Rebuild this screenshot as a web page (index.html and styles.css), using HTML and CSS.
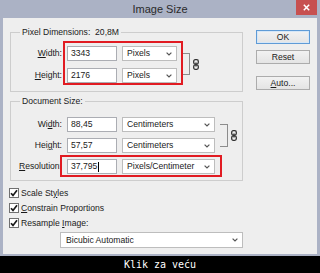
FILE: index.html
```html
<!DOCTYPE html>
<html>
<head>
<meta charset="utf-8">
<link rel="stylesheet" href="styles.css">
</head>
<body>
<div class="window">
  <div class="titlebar">
    <span class="title">Image Size</span>
    <span class="close"><svg width="7" height="7" viewBox="0 0 7 7"><path d="M0.8 0.8L6.2 6.2M6.2 0.8L0.8 6.2" stroke="#fff" stroke-width="1.5"/></svg></span>
  </div>
  <div class="client">
    <div class="left">
      <fieldset class="group group-pixel">
        <legend>Pixel Dimensions:&nbsp; 20,8M</legend>
        <div class="grid grid-pixel">
          <span class="lbl"><u>W</u>idth:</span>
          <div class="field">3343</div>
          <div class="combo"><span>Pixels</span><svg class="chev" width="6" height="4" viewBox="0 0 6 4"><path d="M0.6 0.6L3 3L5.4 0.6" fill="none" stroke="#555" stroke-width="1.2"/></svg></div>
          <div class="link link-pixel">
            <span class="bracket bracket-pixel"></span>
            <svg width="6" height="11" viewBox="0 0 6 11"><rect x="0.7" y="0.7" width="4.6" height="4.4" rx="1.5" fill="none" stroke="#333" stroke-width="1.3"/><rect x="0.7" y="5.9" width="4.6" height="4.4" rx="1.5" fill="none" stroke="#333" stroke-width="1.3"/><path d="M3 3.4V7.6" stroke="#333" stroke-width="1.3"/></svg>
          </div>
          <span class="lbl"><u>H</u>eight:</span>
          <div class="field">2176</div>
          <div class="combo"><span>Pixels</span><svg class="chev" width="6" height="4" viewBox="0 0 6 4"><path d="M0.6 0.6L3 3L5.4 0.6" fill="none" stroke="#555" stroke-width="1.2"/></svg></div>
        </div>
      </fieldset>
      <fieldset class="group group-doc">
        <legend>Document Size:</legend>
        <div class="grid grid-doc">
          <span class="lbl">Wi<u>d</u>th:</span>
          <div class="field">88,45</div>
          <div class="combo"><span>Centimeters</span><svg class="chev" width="6" height="4" viewBox="0 0 6 4"><path d="M0.6 0.6L3 3L5.4 0.6" fill="none" stroke="#555" stroke-width="1.2"/></svg></div>
          <div class="link link-doc">
            <span class="bracket bracket-doc"></span>
            <svg width="6" height="11" viewBox="0 0 6 11"><rect x="0.7" y="0.7" width="4.6" height="4.4" rx="1.5" fill="none" stroke="#333" stroke-width="1.3"/><rect x="0.7" y="5.9" width="4.6" height="4.4" rx="1.5" fill="none" stroke="#333" stroke-width="1.3"/><path d="M3 3.4V7.6" stroke="#333" stroke-width="1.3"/></svg>
          </div>
          <span class="lbl">Hei<u>g</u>ht:</span>
          <div class="field">57,57</div>
          <div class="combo"><span>Centimeters</span><svg class="chev" width="6" height="4" viewBox="0 0 6 4"><path d="M0.6 0.6L3 3L5.4 0.6" fill="none" stroke="#555" stroke-width="1.2"/></svg></div>
          <span class="lbl"><u>R</u>esolution:</span>
          <div class="field"><span>37,795</span><span class="caret"></span></div>
          <div class="combo"><span>Pixels/Centimeter</span><svg class="chev" width="6" height="4" viewBox="0 0 6 4"><path d="M0.6 0.6L3 3L5.4 0.6" fill="none" stroke="#555" stroke-width="1.2"/></svg></div>
        </div>
      </fieldset>
      <div class="checks">
        <div class="check"><span class="cb"><svg width="8" height="8" viewBox="0 0 8 8"><path d="M1 4.2L3 6.4L7 1.2" fill="none" stroke="#1a1a1a" stroke-width="1.7"/></svg></span><span>Scale St<u>y</u>les</span></div>
        <div class="check"><span class="cb"><svg width="8" height="8" viewBox="0 0 8 8"><path d="M1 4.2L3 6.4L7 1.2" fill="none" stroke="#1a1a1a" stroke-width="1.7"/></svg></span><span><u>C</u>onstrain Proportions</span></div>
        <div class="check"><span class="cb"><svg width="8" height="8" viewBox="0 0 8 8"><path d="M1 4.2L3 6.4L7 1.2" fill="none" stroke="#1a1a1a" stroke-width="1.7"/></svg></span><span>Resample <u>I</u>mage:</span></div>
      </div>
      <div class="combo combo-method"><span>Bicubic Automatic</span><svg class="chev" width="6" height="4" viewBox="0 0 6 4"><path d="M0.6 0.6L3 3L5.4 0.6" fill="none" stroke="#555" stroke-width="1.2"/></svg></div>
    </div>
    <div class="buttons">
      <div class="btn btn-default">OK</div>
      <div class="btn">Reset</div>
      <div class="btn btn-auto"><u>A</u>uto...</div>
    </div>
    <div class="mark mark-pixel"></div>
    <div class="mark mark-res"></div>
  </div>
</div>
<div class="caption">Klik za veću</div>
</body>
</html>
```

FILE: styles.css
```css
* { box-sizing: border-box; }
html, body { margin: 0; padding: 0; background: #000; }
body {
  width: 320px;
  height: 273px;
  overflow: hidden;
  font-family: "Liberation Sans", Arial, sans-serif;
  font-size: 8.6px;
  color: #1a1a1a;
}
u { text-decoration: underline; text-underline-offset: 1px; }

.window {
  width: 320px;
  height: 256px;
  background: #abb2c5;
  padding: 0 3px 2px 3px;
  display: flex;
  flex-direction: column;
}
.titlebar {
  height: 18px;
  position: relative;
  display: flex;
  align-items: center;
  justify-content: center;
  margin: 0 -3px;
}
.title {
  font-size: 11px;
  color: #2a2a2a;
  line-height: 18px;
}
.close {
  position: absolute;
  top: 0;
  right: 3px;
  width: 21px;
  height: 15px;
  background: #c75050;
  display: flex;
  align-items: center;
  justify-content: center;
}
.client {
  position: relative;
  flex: 1;
  background: #eeeeee;
  display: flex;
  padding: 8px 0 0 7px;
  gap: 13px;
}
.left {
  width: 233px;
  display: flex;
  flex-direction: column;
}
.group {
  margin: 0;
  padding: 0 0 8px 0;
  border: 1px solid #cdcdcd;
  min-width: 0;
  min-inline-size: 0;
}
.group legend {
  margin-left: 9px;
  padding: 0 2px;
  line-height: 12px;
  font-size: 8.6px;
}
.group-doc {
  margin-top: 3px;
  padding-bottom: 6px;
}
.grid {
  display: grid;
  grid-auto-rows: 15px;
  column-gap: 5px;
}
.grid-pixel {
  grid-template-columns: 51px 50px 55px auto;
  row-gap: 7px;
  margin-top: 8px;
}
.grid-doc {
  grid-template-columns: 51px 50px 93px auto;
  row-gap: 6px;
  margin-top: 10px;
}
.lbl {
  text-align: right;
  line-height: 15px;
  white-space: nowrap;
}
.field {
  height: 15px;
  border: 1px solid #abadb3;
  background: #fff;
  padding-left: 3px;
  line-height: 13px;
  display: flex;
  align-items: center;
}
.caret {
  display: inline-block;
  width: 1px;
  height: 10px;
  background: #000;
  margin-left: 1px;
}
.combo {
  height: 15px;
  border: 1px solid #bdbdbd;
  background: #fff;
  padding: 0 4px 0 4px;
  line-height: 13px;
  display: flex;
  align-items: center;
  justify-content: space-between;
  white-space: nowrap;
}
.chev { flex: none; }
.link {
  grid-column: 4;
  grid-row: 1 / span 2;
  display: flex;
  align-items: center;
}
.bracket {
  width: 8px;
  align-self: stretch;
  border: 1px solid #8c8c8c;
  border-left: none;
  margin-right: 3px;
}
.bracket-pixel { margin-top: 7px; margin-bottom: 8px; }
.bracket-doc { margin-top: 7px; margin-bottom: 6px; }

.checks {
  margin-top: 4px;
  margin-left: -1px;
}
.check {
  height: 15px;
  display: flex;
  align-items: center;
  gap: 2px;
}
.cb {
  width: 10px;
  height: 10px;
  border: 1px solid #707070;
  background: #fff;
  display: flex;
  align-items: center;
  justify-content: center;
}
.combo-method {
  margin-top: 2px;
  margin-left: 50px;
  height: 16px;
  padding-left: 5px;
}

.buttons {
  margin-top: 4px;
  width: 54px;
  display: flex;
  flex-direction: column;
}
.btn {
  height: 14px;
  border: 1px solid #acacac;
  background: linear-gradient(#f2f2f2, #e4e4e4);
  text-align: center;
  line-height: 12px;
  margin-bottom: 6px;
}
.btn-default {
  border-color: #5f9bd6;
  box-shadow: inset 0 0 0 1px #d6e7f7;
}
.btn-auto { margin-top: 6px; }

.mark {
  position: absolute;
  border: 2px solid #e11b22;
}
.mark-pixel { left: 60px; top: 23px; width: 120px; height: 44px; }
.mark-res { left: 57px; top: 137px; width: 162px; height: 22px; }

.caption {
  height: 17px;
  background: #000;
  color: #fff;
  font-family: "DejaVu Sans Mono", monospace;
  font-size: 10px;
  line-height: 17px;
  text-align: center;
}
```
